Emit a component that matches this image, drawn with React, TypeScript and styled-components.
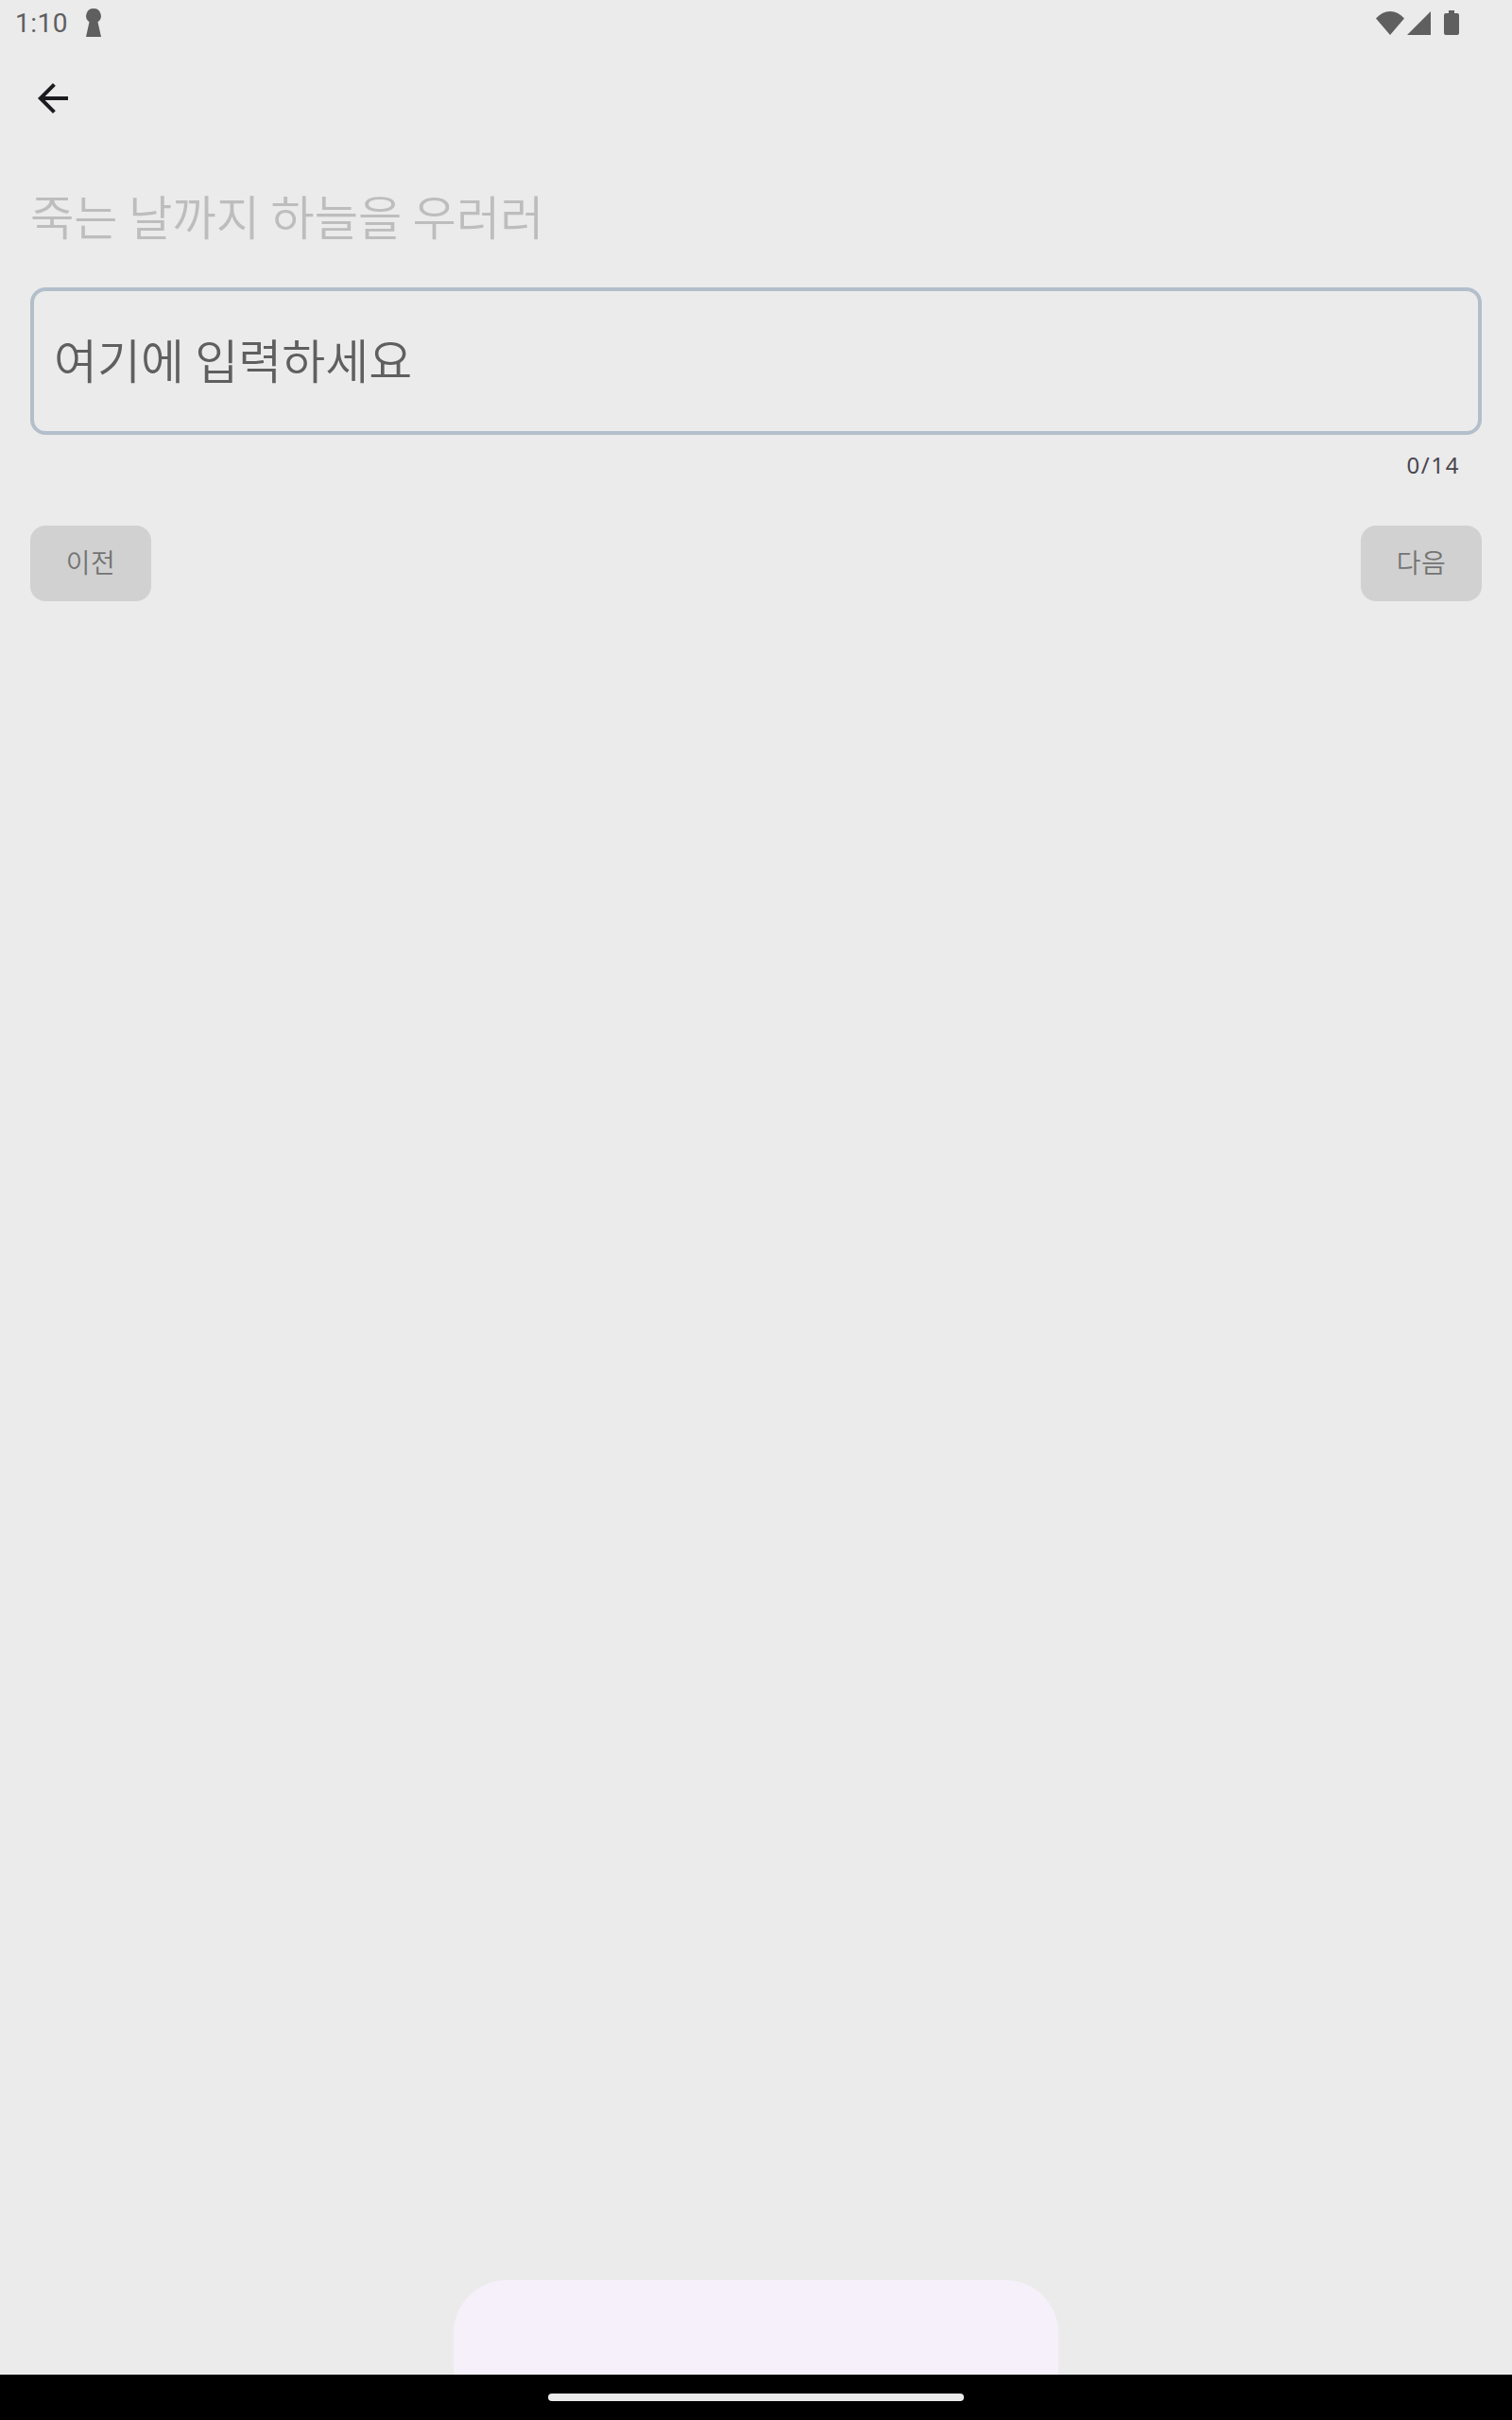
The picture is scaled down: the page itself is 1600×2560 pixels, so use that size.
import React from 'react';
import styled, { createGlobalStyle } from 'styled-components';
import { MdArrowBack } from 'react-icons/md';

const GlobalStyle = createGlobalStyle`
  html, body {
    margin: 0;
    padding: 0;
    background: #ebebeb;
  }
`;

const Page = styled.div`
  display: flex;
  flex-direction: column;
  width: 1600px;
  height: 2560px;
  overflow: hidden;
  background: #ebebeb;
  font-family: "Noto Sans CJK KR", "Noto Sans", sans-serif;
`;

const StatusBar = styled.div`
  display: flex;
  align-items: center;
  height: 48px;
  padding: 0 56px 0 16px;
  color: #5f5f5f;
`;

const Clock = styled.span`
  padding-top: 2px;
  font-family: Roboto, sans-serif;
  font-size: 28px;
  letter-spacing: 0.5px;
  line-height: 46px;
  width: 75px;
`;

const StatusIcons = styled.div`
  display: flex;
  align-items: center;
  gap: 3px;
  margin-left: auto;
`;

const Toolbar = styled.div`
  display: flex;
  align-items: center;
  height: 112px;
  padding-left: 32px;
  color: #1c1b1f;
`;

const Content = styled.div`
  display: flex;
  flex: 1;
  flex-direction: column;
  padding: 33px 32px 0;
`;

const Prompt = styled.div`
  color: #bdbdbd;
  font-size: 50.4px;
  font-weight: 350;
  line-height: 70px;
  white-space: nowrap;
`;

const InputBox = styled.div`
  display: flex;
  align-items: center;
  box-sizing: border-box;
  height: 156px;
  margin-top: 41px;
  padding: 0 21px 6px;
  border: 4px solid #b2bfcb;
  border-radius: 16px;
`;

const Placeholder = styled.span`
  color: #5f5f5f;
  font-size: 50px;
  font-weight: 350;
  line-height: 70px;
`;

const Counter = styled.div`
  align-self: flex-end;
  margin-top: 16px;
  padding-right: 23px;
  color: #49454f;
  font-family: "Noto Sans", sans-serif;
  font-size: 24px;
  letter-spacing: 1.6px;
  line-height: 32px;
`;

const Actions = styled.div`
  display: flex;
  justify-content: space-between;
  margin-top: 48px;
`;

const StepButton = styled.div`
  display: flex;
  align-items: center;
  justify-content: center;
  box-sizing: border-box;
  width: 128px;
  height: 80px;
  padding-bottom: 4px;
  border-radius: 16px;
  background: #d1d1d1;
  color: #737373;
  font-size: 28px;
  font-weight: 350;
  letter-spacing: 0.5px;
`;

const Sheet = styled.div`
  align-self: center;
  width: 640px;
  height: 100px;
  border-radius: 56px 56px 0 0;
  background: #f5f0f9;
`;

const NavBar = styled.div`
  display: flex;
  align-items: center;
  justify-content: center;
  height: 48px;
  background: #000000;
`;

const NavHandle = styled.div`
  width: 440px;
  height: 8px;
  border-radius: 4px;
  background: #ebebeb;
`;

const KeyholeIcon = () => (
  <svg width="16" height="30" viewBox="0 0 16 30" fill="currentColor">
    <path d="M8 0a7.8 7.8 0 0 1 4.5 14.2L16 30H0l3.5-15.8A7.8 7.8 0 0 1 8 0z" />
  </svg>
);

const WifiIcon = () => (
  <svg width="30" height="25" viewBox="0 0 30 25" fill="currentColor">
    <path d="M0 7.5C4 3 9.3 0 15 0s11 3 15 7.5L15 25z" />
  </svg>
);

const SignalIcon = () => (
  <svg width="25" height="25" viewBox="0 0 25 25" fill="currentColor">
    <path d="M25 0v25H0z" />
  </svg>
);

const BatteryIcon = () => (
  <svg width="16" height="26" viewBox="0 0 16 26" fill="currentColor" style={{ marginLeft: 11 }}>
    <path d="M5 0h6v3h3a2 2 0 0 1 2 2v19a2 2 0 0 1-2 2H2a2 2 0 0 1-2-2V5a2 2 0 0 1 2-2h3z" />
  </svg>
);

const App: React.FC = () => {
  return (
    <>
      <GlobalStyle />
      <Page>
        <StatusBar>
          <Clock>1:10</Clock>
          <KeyholeIcon />
          <StatusIcons>
            <WifiIcon />
            <SignalIcon />
            <BatteryIcon />
          </StatusIcons>
        </StatusBar>
        <Toolbar>
          <MdArrowBack size={48} />
        </Toolbar>
        <Content>
          <Prompt>죽는 날까지 하늘을 우러러</Prompt>
          <InputBox>
            <Placeholder>여기에 입력하세요</Placeholder>
          </InputBox>
          <Counter>0/14</Counter>
          <Actions>
            <StepButton>이전</StepButton>
            <StepButton>다음</StepButton>
          </Actions>
        </Content>
        <Sheet />
        <NavBar>
          <NavHandle />
        </NavBar>
      </Page>
    </>
  );
};

export default App;
